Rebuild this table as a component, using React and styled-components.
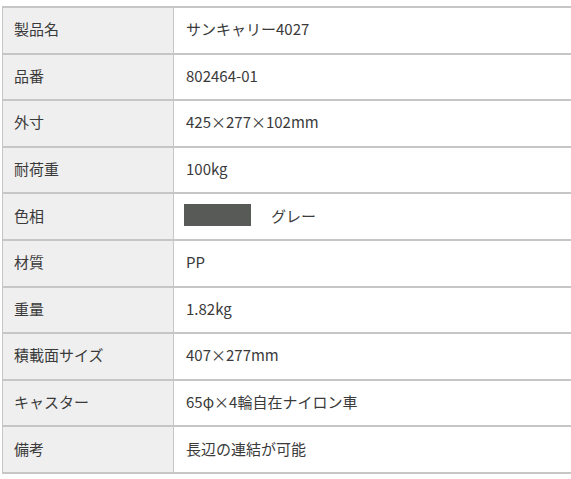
import React from 'react'
import styled, { createGlobalStyle } from 'styled-components'

const GlobalStyle = createGlobalStyle`
  html, body {
    margin: 0;
    padding: 0;
    background: #fff;
  }
  body {
    font-family: "Noto Sans CJK JP", "Noto Sans", sans-serif;
    color: #333;
  }
`

const Wrapper = styled.section`
  padding: 6px 0 0 2px;
`

const Table = styled.div`
  display: grid;
  grid-template-columns: 171px 1fr;
  border-left: 1px solid #c6c6c6;
  border-bottom: 2px solid #c6c6c6;
`

const Label = styled.div`
  display: flex;
  align-items: center;
  box-sizing: border-box;
  height: 46.6px;
  padding: 0 0 3px 11px;
  background: #efefef;
  border-top: 2px solid #c6c6c6;
  border-right: 1px solid #c6c6c6;
  font-size: 15px;
  line-height: 1;
  color: #3a3a3a;
`

const Value = styled.div`
  display: flex;
  align-items: center;
  gap: 20px;
  box-sizing: border-box;
  height: 46.6px;
  padding: 0 0 3px 12px;
  background: #fff;
  border-top: 2px solid #c6c6c6;
  font-size: 15px;
  line-height: 1;
  color: #3a3a3a;
`

const Swatch = styled.span`
  display: inline-block;
  width: 67px;
  height: 22px;
  margin-left: -2px;
  background: ${props => props.color};
`

const rows = [
  { label: '製品名', value: 'サンキャリー4027' },
  { label: '品番', value: '802464-01' },
  { label: '外寸', value: '425×277×102mm' },
  { label: '耐荷重', value: '100kg' },
  { label: '色相', value: 'グレー', swatch: '#575a57' },
  { label: '材質', value: 'PP' },
  { label: '重量', value: '1.82kg' },
  { label: '積載面サイズ', value: '407×277mm' },
  { label: 'キャスター', value: '65φ×4輪自在ナイロン車' },
  { label: '備考', value: '長辺の連結が可能' },
]

export default function App () {
  return (
    <Wrapper>
      <GlobalStyle />
      <Table>
        {rows.map(row => (
          <React.Fragment key={row.label}>
            <Label>{row.label}</Label>
            <Value>
              {row.swatch && <Swatch color={row.swatch} />}
              <span>{row.value}</span>
            </Value>
          </React.Fragment>
        ))}
      </Table>
    </Wrapper>
  )
}
